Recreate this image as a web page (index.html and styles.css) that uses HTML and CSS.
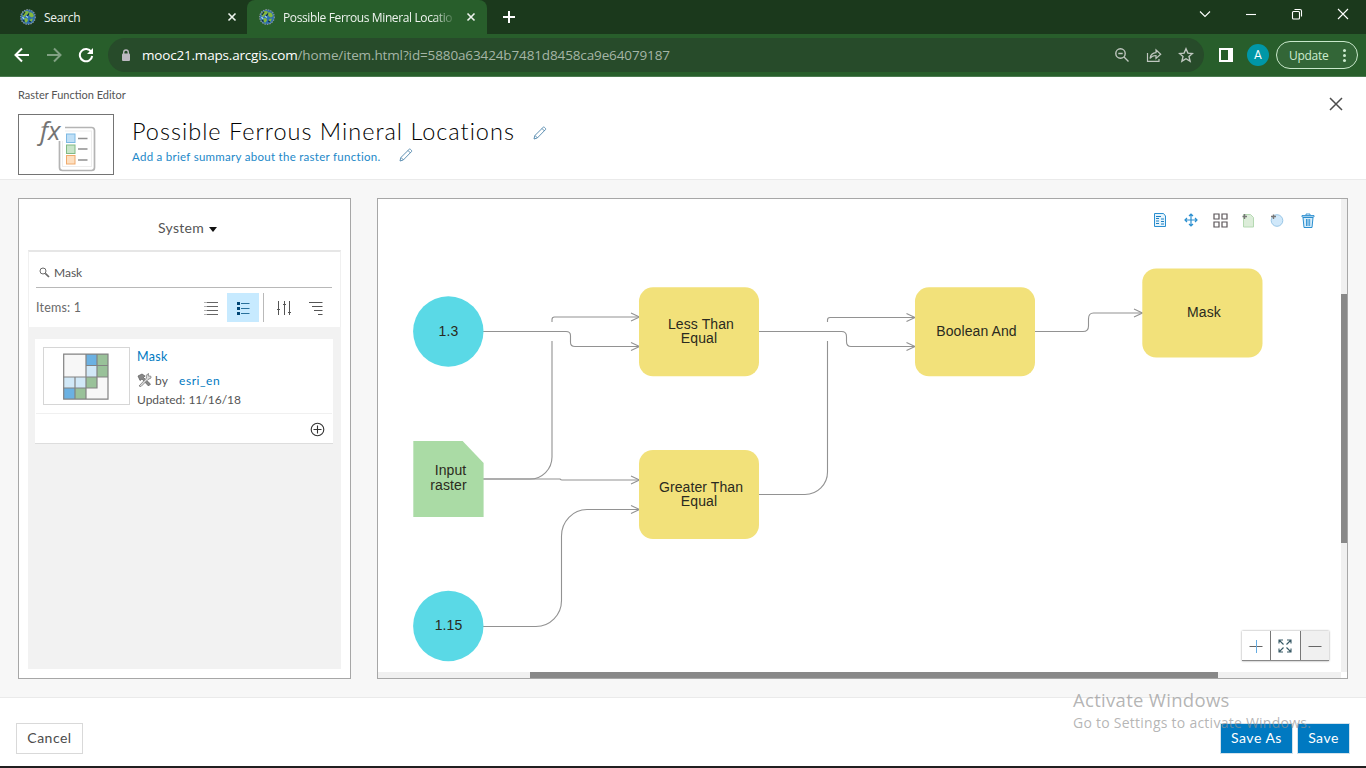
FILE: index.html
```html
<!DOCTYPE html>
<html lang="en">
<head>
<meta charset="utf-8">
<title>Possible Ferrous Mineral Locations</title>
<link rel="stylesheet" href="styles.css">
</head>
<body>
<svg class="defs" width="0" height="0">
  <symbol id="globe" viewBox="0 0 16 16">
    <circle cx="8" cy="8" r="7.3" fill="#2c6fae" stroke="#8a98a0" stroke-width="1.2" stroke-dasharray="1.5 1"/>
    <path d="M3 3.500l3-1.500 3 .5-1 2.500-2 1-1.500 2-2-1zM9.500 3l3 1 1.500 3-2 1.500-2-1-1.500-2zM4.500 9l3 .5 .5 2-2 2.500-1.500-2zM10.500 10l2.500-.5-1.500 3.200-1.500-.7z" fill="#85b83c"/>
    <path d="M3 6l2-3M7 7.500l2-3M3 11l1.500 1.500M9 12l2 1" stroke="#152f3d" stroke-width="1.300" fill="none"/>
    <path d="M6 7l2 1.500M2.500 8l1.500 2" stroke="#9fd4ed" stroke-width="1.300"/>
  </symbol>
  <symbol id="cross" viewBox="0 0 10 10"><path d="M1.500 1.500l7 7M8.500 1.500l-7 7" fill="none" stroke="currentColor" stroke-width="1.600"/></symbol>
  <symbol id="pencil" viewBox="0 0 14 14"><path d="M1 13l.8-3.400L10.200 1.300q.6-.6 1.200 0l1.100 1.100q.6.6 0 1.200L4.300 12zM9 2.500l2.400 2.400M2 9.500l2.400 2.400" fill="none" stroke="#4f86ab" stroke-width=".9"/></symbol>
</svg>

<header class="tabs">
  <div class="tab"><svg class="fav"><use href="#globe"/></svg><span class="tab-name">Search</span><svg class="tab-x"><use href="#cross"/></svg></div>
  <div class="tab active"><svg class="fav"><use href="#globe"/></svg><span class="tab-name fade">Possible Ferrous Mineral Locatio</span><svg class="tab-x"><use href="#cross"/></svg></div>
  <svg class="newtab" viewBox="0 0 12 12"><path d="M6 0v12M0 6h12" stroke="#fff" stroke-width="2"/></svg>
  <div class="winctl">
    <svg width="12" height="12" viewBox="0 0 12 12"><path d="M1 3.500l5 5 5-5"/></svg>
    <svg width="12" height="12" viewBox="0 0 12 12"><path d="M1 6.500h10"/></svg>
    <svg width="12" height="12" viewBox="0 0 12 12"><rect x="1.500" y="3.500" width="7" height="7.500" rx="1"/><path d="M3.500 1.500H9q1.500 0 1.500 1.500v5.500"/></svg>
    <svg width="12" height="12" viewBox="0 0 12 12"><path d="M1 1l10 10M11 1L1 11"/></svg>
  </div>
</header>

<nav class="toolbar">
  <svg width="16" height="16" viewBox="0 0 16 16" stroke="#fff"><path d="M15 8H2M8 1.500L1.500 8 8 14.500"/></svg>
  <svg width="16" height="16" viewBox="0 0 16 16" stroke="#81a183"><path d="M1 8h13M8 1.500L14.500 8 8 14.500"/></svg>
  <svg width="16" height="16" viewBox="0 0 16 16" stroke="#fff"><path d="M13.300 4.800A6.200 6.200 0 1 0 14.200 9"/><path d="M15 1v6H9z" fill="#fff" stroke="none"/></svg>
  <div class="omnibox">
    <svg class="lock" width="10" height="13" viewBox="0 0 10 13"><rect x="1" y="4.500" width="8" height="7.500" rx="1" fill="#bdb9c1"/><path d="M2.700 5V3.300a2.300 2.300 0 0 1 4.600 0V5" fill="none" stroke="#bdb9c1" stroke-width="1.400"/></svg>
    <span class="url"><b>mooc21.maps.arcgis.com</b>/home/item.html?id=5880a63424b7481d8458ca9e64079187</span>
    <div class="omni-icons">
      <svg width="16" height="16" viewBox="0 0 16 16"><circle cx="6.500" cy="6.500" r="4.700"/><path d="M10 10l4.500 4.500M4.300 6.500h4.400"/></svg>
      <svg width="16" height="16" viewBox="0 0 16 16"><path d="M1.500 6v8.300h11.500V12M4 11.500C4.500 8 6.500 5.800 10 5.700V2.800l4.700 4.500L10 11.500V8.500Q6 8.500 4 11.500z" stroke-width="1.200"/></svg>
      <svg width="16" height="16" viewBox="0 0 16 16"><path d="M8 1.800l1.900 4.300 4.600.4-3.500 3.100 1.100 4.600L8 11.700l-4.100 2.500L5 9.600 1.500 6.500l4.600-.4z"/></svg>
    </div>
  </div>
  <svg class="side" width="14" height="14" viewBox="0 0 14 14"><path d="M0 0h14v14H0zM2 2v10h7V2z" fill="#fff" fill-rule="evenodd"/></svg>
  <div class="avatar">A</div>
  <div class="update"><span>Update</span><i></i></div>
</nav>

<section class="head">
  <div class="head-label">Raster Function Editor</div>
  <div class="head-row">
    <svg class="thumb" width="96" height="61" viewBox="0 0 96 61">
      <rect x=".5" y=".5" width="95" height="60" fill="#fff" stroke="#747474"/>
      <rect x="41.500" y="13.500" width="35" height="43" rx="3" fill="#fff" stroke="#b4b4b4" stroke-width="1.700"/>
      <rect x="44.500" y="17" width="29" height="35.500" fill="#fff" stroke="#ededed"/>
      <path d="M38 11h9v16h-9z" fill="#fff"/>
      <rect x="48.500" y="20" width="8.500" height="8.500" fill="#bfdff6" stroke="#7db9e3"/><rect x="48.500" y="31" width="8.500" height="8.500" fill="#c8e5c9" stroke="#81b984"/><rect x="48.500" y="41.500" width="8.500" height="8.500" fill="#fddfc0" stroke="#efaa6d"/>
      <path d="M60 24.500h9.500M60 35h9.500M60 46h9.500" stroke="#909090" stroke-width="1.300"/>
      <text x="22" y="25.500" class="fx">fx</text>
    </svg>
    <div class="titles">
      <div class="line"><h1>Possible Ferrous Mineral Locations</h1><svg class="pen pen-a"><use href="#pencil"/></svg></div>
      <div class="line"><a class="summary">Add a brief summary about the raster function.</a><svg class="pen pen-b"><use href="#pencil"/></svg></div>
    </div>
  </div>
  <svg class="close" width="14" height="14" viewBox="0 0 14 14"><path d="M1 1l12 12M13 1L1 13" stroke="#4c4c4c" stroke-width="1.500"/></svg>
</section>

<main class="work">
  <aside class="panel finder">
    <div class="source"><span>System</span><i></i></div>
    <div class="results">
      <div class="filters">
        <div class="search"><svg width="11" height="11" viewBox="0 0 11 11"><circle cx="4" cy="4" r="3" fill="none" stroke="#6a6a6a"/><path d="M6.300 6.300L10 10" stroke="#6a6a6a" stroke-width="1.700"/></svg><span>Mask</span></div>
        <div class="tools">
          <span class="count">Items: 1</span>
          <div class="tool"><svg width="14" height="14" viewBox="0 0 14 14"><path d="M2.500 1.500H14M2.500 5.500H14M2.500 9.500H14M2.500 13.500H14M.5 1.500h1M.5 5.500h1M.5 9.500h1M.5 13.500h1" stroke="#666"/></svg></div>
          <div class="tool on"><svg width="14" height="14" viewBox="0 0 14 14"><path d="M5 2.500h8.500M5 7.500h8.500M5 12.500h8.500" stroke="#28709b"/><path d="M1 1h3v3H1zM1 6h3v3H1zM1 11h3v3H1z" fill="#004575"/></svg></div>
          <div class="sep"></div>
          <div class="tool"><svg width="14" height="14" viewBox="0 0 14 14"><path d="M1.500 0v14M7.500 0v14M12.500 0v14M0 8.500h3M6 3.500h3M11 11.500h3" stroke="#555"/></svg></div>
          <div class="tool last"><svg width="14" height="14" viewBox="0 0 14 14"><path d="M0 1.500h13.500M3 5.500h10.500M5 9.500h8.500M9 13.500h4.500" stroke="#555"/></svg></div>
        </div>
      </div>
      <article class="card">
        <div class="card-top">
          <div class="pic"><svg width="46" height="47" viewBox="0 0 46 47"><path d="M.5 1H45v45H.5z" fill="#f7f7f7"/><path d="M23 1h11v12H23zM.5 35h11.500v11H.5z" fill="#6bb1e2"/><path d="M34 1h11v23H34zM23 24h11v11H23zM12 35h11v11H12z" fill="#99c199"/><path d="M23 13h11v11H23zM.5 24H23v11H.5z" fill="#d1e8f7"/><path d="M.7 1.200H45v45H.7zM23 1v45M34 1v34H0M45 12.500H23M45 24H0M12 24v22" fill="none" stroke="#828282" stroke-width="1.200"/></svg></div>
          <div class="meta">
            <a class="m1">Mask</a>
            <div class="m2"><svg width="15" height="14" viewBox="0 0 15 14"><path d="M1 3l4-2 3 2-1.500 1.500L13.500 11l-2 2L5 6 3 7.500z" fill="#888" stroke="#5a5a5a" stroke-width=".7"/><path d="M2 13L9.500 5 9 2.500 11.500.5l-.3 2.500 2.600.2L14 5l-3 1.500-7 7z" fill="#ddd" stroke="#777" stroke-width=".8"/></svg><span class="by">by</span><a class="owner">esri_en</a></div>
            <div class="m3">Updated: 11/16/18</div>
          </div>
        </div>
        <div class="card-foot"><svg width="15" height="15" viewBox="0 0 15 15"><circle cx="7.500" cy="7.500" r="6.300" fill="none" stroke="#333" stroke-width="1.100"/><path d="M7.500 3.500v8M3.500 7.500h8" stroke="#333" stroke-width="1.100"/></svg></div>
      </article>
    </div>
  </aside>

  <section class="panel editor">
    <svg class="graph" width="963" height="473" viewBox="378 199 963 473">
      <g class="wires">
        <path d="M483 331.500h83q4.500 0 4.500 4v7q0 4 4.500 4h64"/>
        <path d="M552 322v-2.500q0-2.500 2.500-2.500h84.500"/>
        <path d="M483 479h47a22 22 0 0 0 22-22V341"/>
        <path d="M483 479h77q1 1 2 1h77"/>
        <path d="M483 626.500h53a25.500 26 0 0 0 25.500-26V536a25.500 26.500 0 0 1 25.500-26.500h52"/>
        <path d="M759 331.500h82.500q5 0 5 5v5q0 5 4.500 5h64"/>
        <path d="M759 494.500h46a22.500 22.500 0 0 0 22.500-22.500V341"/>
        <path d="M827.500 322v-2q0-2.500 2.500-2.500h85"/>
        <path d="M1035 331.500h48q5.500 0 5.500-5.500v-7q0-6 5-6h49"/>
        <path d="M631 313l8.500 4-8.500 4M631 342.500l8.500 4-8.500 4M631 476l8.500 4-8.500 4M631 505.500l8.500 4-8.500 4M906.500 313.500l8.500 4-8.500 4M906.500 342.500l8.500 4-8.500 4M1134 309l8.500 4-8.500 4"/>
      </g>
      <g fill="#5ad9e6"><circle cx="448.300" cy="331.500" r="35.200"/><circle cx="448.300" cy="626" r="35.200"/></g>
      <path d="M413.300 441h49.300l21 22v54h-70.300z" fill="#aadba5"/>
      <g fill="#f2e17a"><rect x="639" y="287.300" width="120" height="89" rx="14"/><rect x="639" y="450" width="120" height="89" rx="14"/><rect x="915" y="287.300" width="120" height="89" rx="14"/><rect x="1142.300" y="268.500" width="120.200" height="89" rx="14"/></g>
      <g class="names">
        <text x="448.500" y="336">1.3</text><text x="448.500" y="630">1.15</text>
        <text x="450.500" y="475">Input</text><text x="448.500" y="490">raster</text>
        <text x="701" y="328.500">Less Than</text><text x="699" y="343">Equal</text>
        <text x="701" y="491.500">Greater Than</text><text x="699" y="506">Equal</text>
        <text x="976.500" y="336">Boolean And</text><text x="1204" y="317">Mask</text>
      </g>
    </svg>
    <div class="vbar"><i></i></div>
    <div class="hbar"><i></i></div>
    <div class="actions">
      <svg width="14" height="16" viewBox="0 0 14 16"><path d="M1.500 1.500h9L12.500 4v10.500h-11z" fill="#e6f4fc" stroke="#2b8fd0"/><path d="M3 4.500h5M3 6.500h3M3 9h3M3 11.500h3M8 7h3M8 9.500h3M8 12h3" stroke="#1d80c3" stroke-width="1.100"/></svg>
      <svg width="14" height="14" viewBox="0 0 14 14"><path d="M7 1v12M1 7h12M5 3l2-2 2 2M5 11l2 2 2-2M3 5L1 7l2 2M11 5l2 2-2 2" fill="none" stroke="#2b8fd0" stroke-width="1.200"/></svg>
      <svg width="15" height="15" viewBox="0 0 15 15"><path d="M1 1h5v5H1zM9 1h5v5H9zM1 9h5v5H1zM9 9h5v5H9z" fill="#fff" stroke="#5b5558" stroke-width="1.200"/></svg>
      <svg width="13" height="15" viewBox="0 0 13 15"><path d="M1.500 1.500H8.500L11.500 4.500v9.500h-10z" fill="#dcedd9" stroke="#b5d9b2"/><path d="M2.500 1v5M.5 3.500h4.500" stroke="#777" stroke-width="1.400"/></svg>
      <svg width="14" height="15" viewBox="0 0 14 15"><circle cx="7" cy="7.500" r="5.800" fill="#d0e8fa" stroke="#98c6e6"/><path d="M3.500 1.500v4.500M1 3.500h5" stroke="#777" stroke-width="1.400"/></svg>
      <svg width="14" height="15" viewBox="0 0 14 15"><path d="M2 4.500h10L11 14.500H3z" fill="#d6ecf9" stroke="#2b8fd0"/><path d="M1 2.500h12v1.500H1zM5 2V1h4v1M5.500 6v7M7 6v7M8.700 6v7" fill="none" stroke="#2b8fd0" stroke-width=".9"/></svg>
    </div>
    <div class="zoom">
      <span><svg width="14" height="14" viewBox="0 0 14 14"><path d="M.5 7.500h13" stroke="#666"/><path d="M7.500 1v13" stroke="#65ace2"/></svg></span>
      <span><svg width="14" height="14" viewBox="0 0 14 14"><path d="M1 4.500V1h4M1 1l4.500 4.500M9 1h4v3.500M13 1L8.500 5.500M1 9.500V13h4M1 13l4.500-4.500M9 13h4V9.500M13 13L8.500 8.500" fill="none" stroke="#385a66" stroke-width="1.100"/></svg></span>
      <span class="out"><svg width="14" height="14" viewBox="0 0 14 14"><path d="M.5 7.500h13" stroke="#666"/></svg></span>
    </div>
  </section>
</main>

<footer class="foot">
  <button class="btn cancel">Cancel</button>
  <button class="btn primary save-as">Save As</button>
  <button class="btn primary save">Save</button>
</footer>
<div class="taskbar"></div>
<div class="watermark"><div class="w1">Activate Windows</div><div class="w2">Go to Settings to activate Windows.</div></div>
</body>
</html>
```
FILE: styles.css
```css
* { box-sizing: border-box; }
body { margin: 0; width: 1366px; height: 768px; overflow: hidden; position: relative; display: flex; flex-direction: column; background: #fff; font-family: Lato, "Open Sans", sans-serif; color: #555; }
svg { display: block; flex: none; }
.defs { position: absolute; }

.tabs { height: 34px; flex: none; background: #1b391c; display: flex; align-items: center; }
.tab { height: 34px; width: 247px; padding-left: 20px; display: flex; align-items: center; color: #eef3ee; font: 12px "Open Sans", sans-serif; letter-spacing: -.3px; }
.tab.active { width: 240px; background: #285e2b; border-radius: 8px 8px 0 0; padding-left: 12px; }
.fav { width: 16px; height: 16px; }
.tab-name { margin-left: 8px; width: 180px; white-space: nowrap; }
.tab.active .tab-name { width: 171px; letter-spacing: -.38px; }
.fade { -webkit-mask-image: linear-gradient(90deg, #000 150px, transparent 174px); mask-image: linear-gradient(90deg, #000 150px, transparent 174px); }
.tab-x { width: 10px; height: 10px; margin-left: 3px; }
.active .tab-x { margin-left: 12px; }
.newtab { width: 12px; height: 12px; margin-left: 16px; }
.winctl { margin-left: auto; margin-right: 17px; margin-top: -6px; display: flex; gap: 34px; fill: none; stroke: #fff; stroke-width: 1.1; }

.toolbar { height: 43px; flex: none; background: #285e2b; border-bottom: 1px solid #4b7b50; display: flex; align-items: center; padding: 0 8px 0 14px; fill: none; stroke-width: 2; }
.toolbar > svg + svg { margin-left: 16px; }
.omnibox { margin-left: 14px; width: 1096px; height: 34px; border-radius: 17px; background: #274b2a; display: flex; align-items: center; padding-left: 13px; }
.url { margin-left: 11px; font: 13.5px "Open Sans", sans-serif; letter-spacing: -.125px; color: #a5b5a6; white-space: nowrap; }
.url b { font-weight: 400; color: #fff; letter-spacing: -.19px; }
.omni-icons { margin-left: auto; margin-right: 10px; display: flex; gap: 16px; stroke: #c0c7c0; stroke-width: 1.4; }
.side { margin-left: 15px; }
.avatar { margin-left: 14px; width: 22px; height: 22px; border-radius: 50%; background: #0097a7; color: #fff; font: 12px/22px Roboto, sans-serif; text-align: center; }
.update { margin-left: 7px; width: 82px; height: 28px; border: 1px solid #c9e8cb; border-radius: 14px; background: #336637; color: #cdebcf; display: flex; align-items: center; font: 12px "Open Sans", sans-serif; letter-spacing: -.3px; padding-left: 12px; }
.update span { width: 54px; }
.update i { width: 3px; height: 3px; border-radius: 50%; background: #cdebcf; box-shadow: 0 -5px #cdebcf, 0 5px #cdebcf; }

.head { height: 103px; flex: none; background: #fff; border-bottom: 1px solid #eaeaea; padding: 11px 24px 0 18px; display: grid; grid-template-columns: 1fr 14px; grid-template-rows: 14px 1fr; row-gap: 12px; }
.head-label { font-size: 11px; line-height: 14px; }
.head-row { display: flex; grid-row: 2; grid-column: 1; }
.close { grid-column: 2; grid-row: 1 / 3; margin-top: 9px; margin-left: 1px; }
.fx { font: italic 26px "Open Sans", sans-serif; fill: #747474; }
.titles { margin-left: 18px; padding-top: 2px; }
.line { display: flex; align-items: center; }
h1 { margin: 0; font: 300 23.500px/30px Lato, sans-serif; letter-spacing: 1px; color: #000; width: 401px; white-space: nowrap; }
.pen { width: 14px; height: 14px; }
.pen-a { margin-top: 4px; }
.pen-b { margin-top: -4px; }
.summary { font-size: 11.500px; letter-spacing: .28px; line-height: 22px; color: #1c88c8; width: 267px; white-space: nowrap; }

.work { height: 517px; flex: none; background: #f7f7f7; padding: 18px 18px 0; display: flex; gap: 26px; }
.panel { height: 481px; border: 1px solid #a7a7a7; background: #fff; position: relative; }
.finder { width: 333px; padding: 0 9px 9px; display: flex; flex-direction: column; }
.source { height: 51px; padding: 6px 0 0 6px; display: flex; align-items: center; justify-content: center; gap: 5px; font-size: 14px; letter-spacing: .3px; }
.source i { border: 4.500px solid transparent; border-top: 5px solid #111; border-bottom: 0; margin-top: 4px; }
.results { height: 419px; background: #f2f2f2; }
.filters { height: 77px; border: 1px solid #f0f0f0; border-top: 2px solid #e6e6e6; border-bottom: 0; background: #fff; padding: 6px 8px 0 7px; }
.search { height: 30px; border-bottom: 1px solid #b8b8b8; display: flex; align-items: center; gap: 4px; padding-left: 3px; font-size: 12px; }
.tools { height: 39px; display: flex; align-items: center; font-size: 12.500px; }
.count { width: 159px; color: #6a6a6a; letter-spacing: .2px; padding-bottom: 1px; }
.tool { width: 32px; height: 29px; display: flex; align-items: center; justify-content: center; }
.on { background: #c7eaff; }
.sep { width: 1px; height: 29px; background: #b9b9b9; margin: 0 4px; }
.card { margin: 12px 8px 0 7px; height: 105px; background: #fff; border-bottom: 1px solid #ddd; }
.card-top { height: 75px; margin: 0 1px; border-bottom: 1px solid #f0f0f0; padding: 8px 0 0 7px; display: flex; }
.pic { width: 87px; height: 58px; border: 1px solid #d6d6d6; display: flex; align-items: center; justify-content: center; padding-right: 1px; }
.meta { margin-left: 7px; font-size: 12px; }
.meta a { color: #0079c1; }
.m1 { display: block; font-size: 12.500px; line-height: 19px; letter-spacing: .3px; }
.m2 { height: 26px; padding-top: 2px; display: flex; align-items: center; }
.owner { letter-spacing: .55px; }
.by { margin-left: 3px; width: 24px; letter-spacing: .3px; }
.m3 { line-height: 16px; }
.card-foot { height: 29px; display: flex; justify-content: flex-end; align-items: center; padding: 2px 8px 0 0; }

.editor { width: 971px; display: grid; grid-template-columns: 963px 6px; grid-template-rows: 473px 6px; }
.wires { fill: none; stroke: #929292; stroke-width: 1.1; }
.names { font: 14px "Liberation Sans", Arial, sans-serif; letter-spacing: .1px; text-anchor: middle; fill: #2a2a20; }
.vbar { background: #f0f0f0; padding-top: 95px; }
.vbar i { display: block; height: 249px; background: #888; }
.hbar { background: #f0f0f0; padding-left: 152px; }
.hbar i { display: block; width: 688px; height: 6px; background: #888; }
.actions { position: absolute; top: 13px; right: 32px; height: 16px; display: flex; align-items: center; gap: 14.500px; }
.actions svg:nth-child(2) { margin-left: 3px; }
.actions svg:last-child { margin-left: 3px; }
.zoom { position: absolute; right: 18px; top: 432px; height: 30px; width: 87px; display: flex; background: #fff; border-bottom: 1px solid #888; box-shadow: 0 0 2px #999; }
.zoom span { flex: 1; display: flex; align-items: center; justify-content: center; }
.zoom span + span { border-left: 1px solid #777; }
.zoom .out { background: #f0f0f0; }

.foot { height: 69px; flex: none; border-top: 1px solid #eaeaea; background: #fff; display: flex; align-items: flex-start; padding: 25px 16px 0; }
.btn { height: 31px; border: 1px solid #d9d9d9; background: #fff; color: #4c4c4c; font: 14px Lato, sans-serif; letter-spacing: .5px; padding: 0 0 2px; }
.cancel { width: 67px; margin-right: auto; }
.primary { background: #0079c1; color: #fff; border-color: #d2e2ec; }
.save-as { width: 73px; margin-right: 4px; }
.save { width: 53px; }
.taskbar { height: 2px; flex: none; background: #211f20; }
.watermark { position: absolute; left: 1073px; top: 688px; font-family: "Open Sans", sans-serif; color: rgba(145,145,145,.68); white-space: nowrap; }
.w1 { font-size: 18.500px; letter-spacing: .3px; line-height: 24px; }
.w2 { font-size: 14px; letter-spacing: .25px; line-height: 21px; }
```
